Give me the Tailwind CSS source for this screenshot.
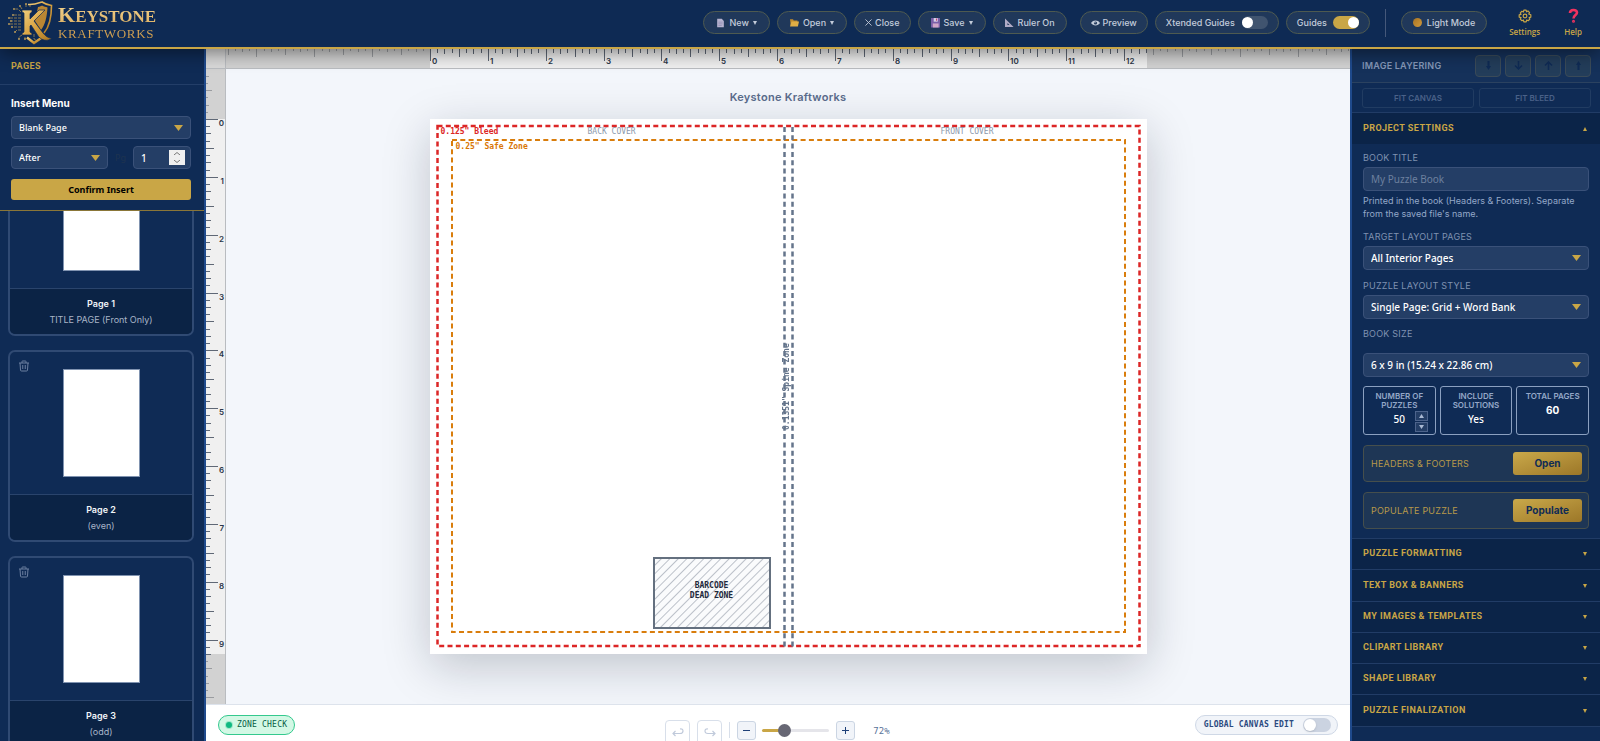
<!DOCTYPE html>
<html lang="en">
<head>
<meta charset="utf-8">
<meta name="viewport" content="width=device-width, initial-scale=1">
<title>Keystone Kraftworks</title>
<script src="https://cdn.jsdelivr.net/npm/@tailwindcss/browser@4"></script>
</head>
<body class="flex h-screen flex-col overflow-hidden bg-[#0f2b55] font-['Inter',sans-serif] text-[11px] text-slate-200">

<header class="relative z-20 flex h-[49px] shrink-0 items-center border-b-2 border-[#c9a646] bg-[#0e2a54] pr-[18px] pb-[2px] pl-2 shadow-[0_4px_18px_rgba(0,0,0,0.45)]">
  <a href="#" aria-label="Keystone Kraftworks" class="flex items-center gap-1">
    <svg class="h-11 w-[46px]" viewBox="0 0 46 44" fill="none">
      <defs><linearGradient id="gold" x1="0" y1="0" x2="1" y2="1"><stop offset="0" stop-color="#f0cd7c"/><stop offset=".5" stop-color="#d9a443"/><stop offset="1" stop-color="#a8741f"/></linearGradient></defs>
      <path d="M20 3.500C26 4 31 2 34 1c3 2 6 3 9.500 3.500C43.500 16 42 25 36 32" stroke="url(#gold)" stroke-width="1.600"/>
      <path d="M30 6c2-.5 3-1 4-1.500 2 1 4 1.500 5.500 2C39 16 37 24 33 29l-6-9z" fill="#b98633"/>
      <path d="M19 36.500l7 5.500 8-5.500" stroke="url(#gold)" stroke-width="2.400"/>
      <path d="M14 9h10v2l-2 1.500V18L31 9h6L26 20l9 12c2.500 3 5 5 9 5.500-5 3-10 2-13.500-2L23 24l-1 1v6l2 1.500V34H14v-1.500l2-1.500V12l-2-1z" fill="url(#gold)" stroke="#0e2a54" stroke-width=".7"/>
      <path d="M13 14H6M13 17H1M13 20H4M13 23H1M13 26H5M13 29H9l-2 2M14 34l-3 2v2M17 36v2M26 33v5l2 1M13 11l-3-3H7M14 8l-2-3M18 6V3M22 6V4" stroke="#a58a50" stroke-width=".8" stroke-dasharray="3 1"/>
      <g fill="#b4975a"><circle cx="5" cy="14" r="1"/><circle cx="1" cy="17" r="1"/><circle cx="3" cy="20" r="1"/><circle cx="1" cy="23" r="1"/><circle cx="4" cy="26" r="1"/><circle cx="7" cy="31" r="1"/><circle cx="11" cy="38" r="1"/><circle cx="17" cy="38" r="1"/><circle cx="6" cy="8" r="1"/><circle cx="12" cy="5" r="1"/><circle cx="18" cy="3" r="1"/></g>
    </svg>
    <span class="flex flex-col bg-linear-to-b from-[#f3d48e] to-[#cc9540] bg-clip-text pt-[2px] font-['Liberation_Serif',serif] text-transparent">
      <span class="text-[17px] leading-[18px] font-bold"><span class="text-[22px]">K</span>EYSTONE</span>
      <span class="text-[13px] leading-4 tracking-wider">KRAFTWORKS</span>
    </span>
  </a>

  <nav class="ml-auto flex items-center gap-[7px] text-[9px] font-medium text-[#c3ccda]">
    <button class="flex h-[23px] items-center gap-1 rounded-full border border-[#4e5a50] bg-[#20385a] px-3">
      <svg class="h-[10px] w-[9px]" viewBox="1 0 10 12"><path d="M2 1h5.500l2.500 2.500V11H2z" fill="#b6b3d0"/><path d="M3.500 5h5M3.500 7h5M3.500 9h4" stroke="#8681ab" stroke-width=".7"/></svg>New<svg class="h-1 w-1" viewBox="0 0 4 4" fill="#c3ccda"><path d="M0 0h4L2 4z"/></svg></button>
    <button class="flex h-[23px] items-center gap-1 rounded-full border border-[#4e5a50] bg-[#20385a] px-3">
      <svg class="h-[10px] w-[9px]" viewBox="0 1 12 11"><path d="M0 1.500h4l1 1.500h5V5H3l-2 5z" fill="#c08b2c"/><path d="M2 4.500h10L10.500 11H0z" fill="#e0ae45"/></svg>Open<svg class="h-1 w-1" viewBox="0 0 4 4" fill="#c3ccda"><path d="M0 0h4L2 4z"/></svg></button>
    <button class="flex h-[23px] items-center gap-[3px] rounded-full border border-[#4e5a50] bg-[#20385a] px-[10px]">
      <svg class="h-[7px] w-[7px]" viewBox="0 0 8 8" stroke="#c3ccda"><path d="M.5.5l7 7M7.500.5l-7 7"/></svg>Close</button>
    <button class="flex h-[23px] items-center gap-1 rounded-full border border-[#4e5a50] bg-[#20385a] px-3">
      <svg class="h-[10px] w-[9px]" viewBox="1 1 10 11"><path d="M1 1h10v10.500H1z" fill="#7b5fa8"/><path d="M4 1h4.500v4H4z" fill="#d8d3ea"/><path d="M6.500 1.500h1.200v2.500H6.500z" fill="#c2456f"/><path d="M3 7h6.500v4.500H3z" fill="#d0a6c8"/></svg>Save<svg class="h-1 w-1" viewBox="0 0 4 4" fill="#c3ccda"><path d="M0 0h4L2 4z"/></svg></button>
    <button class="flex h-[23px] items-center gap-1 rounded-full border border-[#4e5a50] bg-[#20385a] px-[11px]">
      <svg class="h-[10px] w-[9px]" viewBox="1 1 11 11"><path d="M1 1v10.500h10.500z M4 6.500L6.500 9H4z" fill="#b0abc6" fill-rule="evenodd"/></svg>Ruler On</button>
    <button class="ml-[6px] flex h-[23px] items-center gap-[3px] rounded-full border border-[#4e5a50] bg-[#20385a] px-[10px]">
      <svg class="h-2 w-[9px]" viewBox="0 0 9 8"><path d="M0 4c2-3.300 7-3.300 9 0-2 3.300-7 3.300-9 0z" fill="#c3ccda"/><circle cx="4.500" cy="4" r="1.600" fill="#20385a"/><circle cx="4" cy="3.600" r=".6" fill="#c3ccda"/></svg>Preview</button>
    <label class="flex h-[23px] items-center gap-[7px] rounded-full border border-[#4e5a50] bg-[#20385a] px-[10px]">Xtended Guides
      <span class="relative flex h-[13px] w-[26px]"><input type="checkbox" class="h-full w-full appearance-none rounded-full bg-[#40546f]"><span class="absolute top-px left-0 h-[11px] w-[11px] rounded-full bg-white"></span></span></label>
    <label class="flex h-[23px] items-center gap-[6px] rounded-full border border-[#4e5a50] bg-[#20385a] px-[10px]">Guides
      <span class="relative flex h-[13px] w-[26px]"><input type="checkbox" checked class="h-full w-full appearance-none rounded-full bg-[#c9a646]"><span class="absolute top-px right-0 h-[11px] w-[11px] rounded-full bg-white"></span></span></label>
    <span class="mx-2 h-7 w-px bg-[#45587a]"></span>
    <button class="flex h-[23px] items-center gap-[5px] rounded-full border border-[#4e5a50] bg-[#20385a] px-[11px]"><span class="h-[9px] w-[9px] rounded-full bg-linear-to-br from-[#a87424] to-[#d09a3c]"></span>Light Mode</button>
    <button class="ml-[15px] flex flex-col items-center gap-1 font-['Open_Sans',sans-serif] text-[8px] leading-[10px] font-semibold text-[#c9a646]">
      <svg class="h-[14px] w-[14px]" viewBox="0 0 24 24" fill="none" stroke="#c9a646" stroke-width="2" stroke-linejoin="round"><circle cx="12" cy="12" r="3.200"/><path d="M10 2h4l.7 2.800 2.400-1.500 2.800 2.800-1.500 2.400L22 10v4l-2.900.8 1.200 2.500-2.800 2.800-2.500-1.300L14 22h-4l-.8-3.200-2.500 1.300-2.800-2.800 1.300-2.500L2 14v-4l3.200-.8-1.300-2.500 2.800-2.800 2.500 1.300z"/></svg>Settings</button>
    <button class="ml-[17px] flex flex-col items-center gap-1 font-['Open_Sans',sans-serif] text-[8px] leading-[10px] font-semibold text-[#c9a646]">
      <svg class="h-[15px] w-[11px]" viewBox="0 0 11 15" fill="none" stroke="#f0325f" stroke-width="2.600"><path d="M2 5C2 1 9 1 9 4.500 9 7 5.500 7 5.500 10.500"/><circle cx="5.500" cy="13.300" r=".6" stroke-width="1.800"/></svg>Help</button>
  </nav>
</header>

<div class="flex min-h-0 flex-1">

<aside class="flex w-[206px] shrink-0 flex-col border-r-2 border-[#1f4a8c] bg-[#0f2b55]">
  <h2 class="flex h-9 shrink-0 items-center border-b border-[#233e68] px-[11px] font-['Roboto',sans-serif] text-[9px] font-bold tracking-wider text-[#c9a646]">PAGES</h2>
  <form class="flex shrink-0 flex-col border-b border-[#8a7638] pt-[11px] pr-[13px] pb-[10px] pl-[11px] font-['Noto_Sans',sans-serif]">
    <label for="kind" class="mb-[5px] font-['Inter',sans-serif] text-[10px] leading-[15px] font-bold text-white">Insert Menu</label>
    <div class="relative flex"><select id="kind" class="h-[23px] w-full appearance-none rounded-[4px] border border-[#3a5179] bg-[#243e66] px-[7px] text-[9px] font-medium text-white"><option>Blank Page</option></select>
      <svg class="pointer-events-none absolute top-[9px] right-2 h-[6px] w-[9px]" viewBox="0 0 9 6"><path d="M0 0h9L4.500 6z" fill="#c9a646"/></svg></div>
    <div class="mt-[7px] flex items-center">
      <div class="relative flex"><select aria-label="Position" class="h-[23px] w-[97px] appearance-none rounded-[4px] border border-[#3a5179] bg-[#243e66] px-[7px] text-[9px] font-medium text-white"><option>After</option></select>
        <svg class="pointer-events-none absolute top-[9px] right-2 h-[6px] w-[9px]" viewBox="0 0 9 6"><path d="M0 0h9L4.500 6z" fill="#c9a646"/></svg></div>
      <label for="pg" class="ml-auto text-[9px] text-[#1e3350]">Pg</label>
      <div class="relative ml-[7px] flex"><input id="pg" type="number" value="1" class="h-[23px] w-[58px] appearance-none rounded-[4px] border border-[#3a5179] bg-[#243e66] px-[7px] text-[10px] font-medium text-white [appearance:textfield] [&::-webkit-inner-spin-button]:appearance-none">
        <span class="absolute top-1 right-[6px] flex h-[15px] w-4 flex-col bg-[#efefef]">
          <button type="button" aria-label="Increase" class="flex flex-1 items-center justify-center"><svg class="h-[3px] w-[6px]" viewBox="0 0 6 3" fill="none" stroke="#777"><path d="M0 3l3-2.500L6 3"/></svg></button>
          <button type="button" aria-label="Decrease" class="flex flex-1 items-center justify-center"><svg class="h-[3px] w-[6px]" viewBox="0 0 6 3" fill="none" stroke="#777"><path d="M0 0l3 2.500L6 0"/></svg></button>
        </span></div>
    </div>
    <button type="button" class="mt-[10px] h-[21px] rounded-[3px] bg-[#c9a646] text-[9px] font-bold text-black">Confirm Insert</button>
  </form>
  <div class="min-h-0 flex-1 overflow-hidden pr-[10px] pl-2">
    <ul class="-mt-[67px] flex flex-col gap-[14px]">
      <li class="overflow-hidden rounded-[7px] border-2 border-[#304a73]">
        <div class="flex h-[142px] justify-center pt-[17px]"><div class="h-[108px] w-[77px] border border-[#8093b0] bg-white"></div></div>
        <div class="flex h-[46px] flex-col items-center border-t border-[#2a446c] bg-[#0b2345] pt-[7px] text-[9px] leading-4"><b class="font-semibold text-slate-100">Page 1</b><span class="text-[#a9b5c8]">TITLE PAGE (Front Only)</span></div>
      </li>
      <li class="relative overflow-hidden rounded-[7px] border-2 border-[#304a73]">
        <button aria-label="Delete page 2" class="absolute top-2 left-2"><svg class="h-3 w-3" viewBox="0 0 24 24" fill="none" stroke="#6d80a1" stroke-width="2"><path d="M2 6h20M8 6V3q0-1 1-1h6q1 0 1 1v3M4 6l1 14q0 2 2 2h10q2 0 2-2l1-14M9.500 10v8M14.500 10v8"/></svg></button>
        <div class="flex h-[142px] justify-center pt-[17px]"><div class="h-[108px] w-[77px] border border-[#8093b0] bg-white"></div></div>
        <div class="flex h-[46px] flex-col items-center border-t border-[#2a446c] bg-[#0b2345] pt-[7px] text-[9px] leading-4"><b class="font-semibold text-slate-100">Page 2</b><span class="text-[#a9b5c8]">(even)</span></div>
      </li>
      <li class="relative overflow-hidden rounded-[7px] border-2 border-[#304a73]">
        <button aria-label="Delete page 3" class="absolute top-2 left-2"><svg class="h-3 w-3" viewBox="0 0 24 24" fill="none" stroke="#6d80a1" stroke-width="2"><path d="M2 6h20M8 6V3q0-1 1-1h6q1 0 1 1v3M4 6l1 14q0 2 2 2h10q2 0 2-2l1-14M9.500 10v8M14.500 10v8"/></svg></button>
        <div class="flex h-[142px] justify-center pt-[17px]"><div class="h-[108px] w-[77px] border border-[#8093b0] bg-white"></div></div>
        <div class="flex h-[46px] flex-col items-center border-t border-[#2a446c] bg-[#0b2345] pt-[7px] text-[9px] leading-4"><b class="font-semibold text-slate-100">Page 3</b><span class="text-[#a9b5c8]">(odd)</span></div>
      </li>
    </ul>
  </div>
</aside>

<main class="flex min-w-0 flex-1 flex-col bg-[#f3f6fb]">
  <div class="flex h-5 shrink-0 border-b border-[#b9bcc0] bg-[#d2d2d2]">
    <div class="w-5 shrink-0 border-r border-[#b9bcc0] bg-[#d9d9d9]"></div>
    <svg id="rulerX" class="h-full min-w-0 flex-1 font-['Inter',sans-serif] text-[8px] font-semibold"></svg>
  </div>
  <div class="flex min-h-0 flex-1">
    <svg id="rulerY" class="h-full w-5 shrink-0 border-r border-[#b9bcc0] bg-[#d2d2d2] font-['Inter',sans-serif] text-[8px] font-semibold"></svg>
    <div class="flex min-w-0 flex-1 flex-col items-center overflow-hidden">
      <h1 class="mt-5 mb-[14px] text-[11px] leading-4 font-semibold tracking-wide text-[#5a6c8c]">Keystone Kraftworks</h1>
      <div class="relative h-[535px] w-[717px] shrink-0 bg-white font-['DejaVu_Sans_Mono',monospace] text-[8px] leading-[10px] shadow-[0_12px_44px_rgba(15,23,42,0.22)]">
        <svg class="absolute inset-0 h-full w-full" viewBox="0 0 717 535" fill="none">
          <defs><pattern id="hatch" width="6" height="6" patternUnits="userSpaceOnUse" patternTransform="rotate(45)"><path d="M.5 0v6" stroke="#bcc1c9"/></pattern></defs>
          <rect x="7.500" y="7" width="702" height="520" stroke="#dc2626" stroke-width="2.500" stroke-dasharray="5 3.300"/>
          <rect x="22" y="21" width="673" height="492" stroke="#d97d0c" stroke-width="2" stroke-dasharray="5 3.300"/>
          <path d="M354.500 8v520M362.500 8v520" stroke="#64748b" stroke-width="2.500" stroke-dasharray="5 3.300"/>
          <rect x="224" y="439" width="116" height="70" fill="#fafbfc"/>
          <rect x="224" y="439" width="116" height="70" fill="url(#hatch)" stroke="#64707f" stroke-width="2"/>
        </svg>
        <span class="absolute top-[8px] left-[11px] font-bold text-[#dc2626]">0.125" Bleed</span>
        <span class="absolute top-[23px] left-[26px] font-bold text-[#d97706]">0.25" Safe Zone</span>
        <span class="absolute top-[8px] left-[158px] text-[#8d99ab]">BACK COVER</span>
        <span class="absolute top-[8px] left-[511px] text-[#8d99ab]">FRONT COVER</span>
        <span class="absolute top-[218px] left-[352px] h-[100px] rotate-180 text-center font-bold text-[#64748b] [writing-mode:vertical-rl]">0.1351" Spine Zone</span>
        <span class="absolute top-[462px] left-[224px] w-[116px] text-center font-bold whitespace-pre-line text-[#1e293b]">BARCODE
DEAD ZONE</span>
      </div>
    </div>
  </div>
  <footer class="grid h-[37px] shrink-0 grid-cols-[1fr_auto_1fr] items-start border-t border-[#dde3ec] bg-white px-3 pt-[10px] font-['DejaVu_Sans_Mono',monospace] text-[8px]">
    <button class="flex h-5 items-center gap-[5px] justify-self-start rounded-full border border-[#34c98e] bg-[#d3f8e5] px-[7px] tracking-wide text-[#065f46]"><span class="h-[6px] w-[6px] rounded-full bg-[#10b981] shadow-[0_0_0_1px_#9ee8c9]"></span>ZONE CHECK</button>
    <div class="flex h-8 items-start pt-[5px] pl-1">
      <button aria-label="Undo" class="flex h-[25px] w-[25px] items-center justify-center rounded-[4px] border border-[#d8dfea]"><svg class="h-[10px] w-3" viewBox="0 0 12 10" fill="none" stroke="#c0cadb" stroke-width="1.200"><path d="M3.500 3L1 5.500 3.500 8M1 5.500h7q3 0 3-2.500T8 1"/></svg></button>
      <button aria-label="Redo" class="ml-[7px] flex h-[25px] w-[25px] items-center justify-center rounded-[4px] border border-[#d8dfea]"><svg class="h-[10px] w-3" viewBox="0 0 12 10" fill="none" stroke="#c0cadb" stroke-width="1.200"><path d="M8.500 3L11 5.500 8.500 8M11 5.500H4Q1 5.500 1 3t3-2"/></svg></button>
      <span class="mx-[7px] mt-[2px] h-4 w-px bg-[#d8dfea]"></span>
      <button aria-label="Zoom out" class="mt-px flex h-[19px] w-[19px] items-center justify-center rounded-[3px] border border-[#cbd5e3] bg-[#f1f4f9]"><svg class="h-[7px] w-[7px]" viewBox="0 0 7 7" stroke="#1e4078"><path d="M0 3.500h7"/></svg></button>
      <div class="ml-[6px] flex h-[21px] w-[67px] items-center"><input type="range" aria-label="Zoom" min="0" max="300" value="88" class="h-[3px] w-full appearance-none rounded-full bg-linear-to-r from-[#c9a646] from-30% to-[#e5e5ea] to-30% [&::-webkit-slider-thumb]:h-[13px] [&::-webkit-slider-thumb]:w-[13px] [&::-webkit-slider-thumb]:appearance-none [&::-webkit-slider-thumb]:rounded-full [&::-webkit-slider-thumb]:bg-[#676774]"></div>
      <button aria-label="Zoom in" class="mt-px ml-[7px] flex h-[19px] w-[19px] items-center justify-center rounded-[3px] border border-[#cbd5e3] bg-[#f1f4f9]"><svg class="h-[7px] w-[7px]" viewBox="0 0 7 7" stroke="#1e4078"><path d="M0 3.500h7M3.500 0v7"/></svg></button>
      <span class="mt-[5px] ml-[13px] w-[27px] text-center text-[9px] leading-3 text-[#5a7399]">72%</span>
    </div>
    <label class="flex h-5 items-center gap-[9px] justify-self-end rounded-full border border-[#cfd8e6] bg-[#f1f4f9] pr-[6px] pl-2 font-bold tracking-wide text-[#2b4a80]">GLOBAL CANVAS EDIT
      <span class="relative flex h-[14px] w-7"><input type="checkbox" class="h-full w-full appearance-none rounded-full bg-[#cbd3e1]"><span class="absolute top-px left-px h-3 w-3 rounded-full bg-white shadow"></span></span></label>
  </footer>
</main>

<aside class="flex w-[250px] shrink-0 flex-col overflow-hidden border-l-2 border-[#1f4a8c] bg-[#0f2b55]">
  <div class="flex h-[34px] shrink-0 items-center gap-1 border-b border-[#2b4260] bg-[#15315a] pr-[9px] pl-[10px]">
    <h2 class="mr-auto text-[9px] font-semibold tracking-wide text-[#8497b7]">IMAGE LAYERING</h2>
    <button aria-label="Send to back" class="flex h-[22px] w-[26px] items-center justify-center rounded-[4px] border border-[#3a4a58] bg-[#233d5a]"><svg class="h-[9px] w-[9px]" viewBox="0 0 9 9" fill="#0f2b55"><path d="M3.500 0h2v5H7L4.500 9 2 5h1.500z"/></svg></button>
    <button aria-label="Send backward" class="flex h-[22px] w-[26px] items-center justify-center rounded-[4px] border border-[#3a4a58] bg-[#233d5a]"><svg class="h-[9px] w-[9px]" viewBox="0 0 9 9" fill="none" stroke="#0f2b55" stroke-width="1.500"><path d="M4.500 0v8M1 4.500L4.500 8 8 4.500"/></svg></button>
    <button aria-label="Bring forward" class="flex h-[22px] w-[26px] items-center justify-center rounded-[4px] border border-[#3a4a58] bg-[#233d5a]"><svg class="h-[9px] w-[9px]" viewBox="0 0 9 9" fill="none" stroke="#0f2b55" stroke-width="1.500"><path d="M4.500 9V1M1 4.500L4.500 1 8 4.500"/></svg></button>
    <button aria-label="Bring to front" class="flex h-[22px] w-[26px] items-center justify-center rounded-[4px] border border-[#3a4a58] bg-[#233d5a]"><svg class="h-[9px] w-[9px]" viewBox="0 0 9 9" fill="#0f2b55"><path d="M3.500 9h2V4H7L4.500 0 2 4h1.500z"/></svg></button>
  </div>
  <div class="flex h-[30px] shrink-0 items-center gap-[5px] border-b border-[#213c66] pr-[9px] pl-[10px] text-[8px] font-semibold text-[#4a6188]">
    <button class="h-5 flex-1 rounded-[3px] border border-[#213c62]">FIT CANVAS</button>
    <button class="h-5 flex-1 rounded-[3px] border border-[#213c62]">FIT BLEED</button>
  </div>
  <button class="flex h-[31px] shrink-0 items-center justify-between bg-[#0b2448] pr-[13px] pl-[11px] font-['Roboto',sans-serif] text-[9px] font-bold tracking-wider text-[#c9a646]">PROJECT SETTINGS<svg class="h-1 w-1" viewBox="0 0 4 4" fill="#c9a646"><path d="M0 4h4L2 0z"/></svg></button>
  <form class="flex shrink-0 flex-col border-b border-[#213c66] px-[11px] pt-[8px] pb-[9px] text-[9px]">
    <label for="title" class="leading-3 tracking-wide text-[#7f92b1]">BOOK TITLE</label>
    <input id="title" placeholder="My Puzzle Book" class="mt-[3px] h-6 rounded-[4px] border border-[#3a5179] bg-[#243e66] px-[7px] font-['Noto_Sans',sans-serif] text-[10px] text-white placeholder:text-[#6d809f]">
    <p class="mt-[3px] text-[9px] leading-[13px] text-[#94a8c8]">Printed in the book (Headers &amp; Footers). Separate from the saved file's name.</p>
    <label for="target" class="mt-[11px] leading-3 tracking-wide text-[#7f92b1]">TARGET LAYOUT PAGES</label>
    <div class="relative mt-[3px] flex"><select id="target" class="h-6 w-full appearance-none rounded-[4px] border border-[#3a5179] bg-[#243e66] px-[7px] font-['Noto_Sans',sans-serif] text-[10px] font-medium text-white"><option>All Interior Pages</option></select>
      <svg class="pointer-events-none absolute top-[9px] right-2 h-[6px] w-[9px]" viewBox="0 0 9 6"><path d="M0 0h9L4.500 6z" fill="#c9a646"/></svg></div>
    <label for="style" class="mt-[10px] leading-3 tracking-wide text-[#7f92b1]">PUZZLE LAYOUT STYLE</label>
    <div class="relative mt-[3px] flex"><select id="style" class="h-6 w-full appearance-none rounded-[4px] border border-[#3a5179] bg-[#243e66] px-[7px] font-['Noto_Sans',sans-serif] text-[10px] font-medium text-white"><option>Single Page: Grid + Word Bank</option></select>
      <svg class="pointer-events-none absolute top-[9px] right-2 h-[6px] w-[9px]" viewBox="0 0 9 6"><path d="M0 0h9L4.500 6z" fill="#c9a646"/></svg></div>
    <label for="size" class="mt-[9px] leading-3 tracking-wide text-[#7f92b1]">BOOK SIZE</label>
    <div class="relative mt-[13px] flex"><select id="size" class="h-6 w-full appearance-none rounded-[4px] border border-[#3a5179] bg-[#243e66] px-[7px] font-['Noto_Sans',sans-serif] text-[10px] font-medium text-white"><option>6 x 9 in (15.24 x 22.86 cm)</option></select>
      <svg class="pointer-events-none absolute top-[9px] right-2 h-[6px] w-[9px]" viewBox="0 0 9 6"><path d="M0 0h9L4.500 6z" fill="#c9a646"/></svg></div>
    <div class="mt-[9px] grid grid-cols-3 gap-1 text-center text-[8px] leading-[9px] font-semibold text-[#94a8c8]">
      <div class="relative h-[49px] rounded-[3px] border border-[#8ba0c0] pt-[5px]"><label for="count">NUMBER OF<br>PUZZLES</label>
        <input id="count" value="50" class="block h-[18px] w-full text-center font-['Noto_Sans',sans-serif] text-[10px] font-medium text-white">
        <span class="absolute right-[7px] bottom-[2px] flex flex-col gap-px"><button type="button" aria-label="More puzzles" class="flex h-[10px] w-[13px] items-center justify-center border border-[#4d648c] bg-[#243e66]"><svg class="h-1 w-[5px]" viewBox="0 0 5 4" fill="#a9b9d3"><path d="M0 4h5L2.500 0z"/></svg></button><button type="button" aria-label="Fewer puzzles" class="flex h-[10px] w-[13px] items-center justify-center border border-[#4d648c] bg-[#243e66]"><svg class="h-1 w-[5px]" viewBox="0 0 5 4" fill="#a9b9d3"><path d="M0 0h5L2.500 4z"/></svg></button></span></div>
      <div class="h-[49px] rounded-[3px] border border-[#8ba0c0] pt-[5px]">INCLUDE<br>SOLUTIONS<div class="mt-[3px] font-['Noto_Sans',sans-serif] text-[10px] leading-3 font-medium text-white">Yes</div></div>
      <div class="h-[49px] rounded-[3px] border border-[#8ba0c0] pt-[5px]">TOTAL PAGES<div class="mt-[3px] text-[10px] leading-3 font-bold text-white">60</div></div>
    </div>
    <div class="mt-[10px] flex h-[37px] items-center justify-between rounded-[4px] border border-[#464f4c] bg-[#1e3655] pr-[6px] pl-[7px] tracking-wide text-[#b8994a]">HEADERS &amp; FOOTERS<button type="button" class="h-[23px] w-[69px] rounded-[3px] bg-linear-to-br from-[#caa94a] to-[#9c7728] text-[10px] font-bold tracking-normal text-[#0f2b55]">Open</button></div>
    <div class="mt-[10px] flex h-[37px] items-center justify-between rounded-[4px] border border-[#464f4c] bg-[#1e3655] pr-[6px] pl-[7px] tracking-wide text-[#b8994a]">POPULATE PUZZLE<button type="button" class="h-[23px] w-[69px] rounded-[3px] bg-linear-to-br from-[#caa94a] to-[#9c7728] text-[10px] font-bold tracking-normal text-[#0f2b55]">Populate</button></div>
  </form>
  <div class="flex shrink-0 flex-col font-['Roboto',sans-serif] text-[9px] font-bold text-[#c9a646]">
    <button class="flex h-[31px] items-center justify-between border-b border-[#213c66] bg-[#0b2448] pr-[13px] pl-[11px] tracking-wider">PUZZLE FORMATTING<svg class="h-1 w-1" viewBox="0 0 4 4" fill="#c9a646"><path d="M0 0h4L2 4z"/></svg></button>
    <button class="flex h-8 items-center justify-between border-b border-[#213c66] bg-[#0b2448] pr-[13px] pl-[11px] tracking-wider">TEXT BOX &amp; BANNERS<svg class="h-1 w-1" viewBox="0 0 4 4" fill="#c9a646"><path d="M0 0h4L2 4z"/></svg></button>
    <button class="flex h-[31px] items-center justify-between border-b border-[#213c66] bg-[#0b2448] pr-[13px] pl-[11px] tracking-wider">MY IMAGES &amp; TEMPLATES<svg class="h-1 w-1" viewBox="0 0 4 4" fill="#c9a646"><path d="M0 0h4L2 4z"/></svg></button>
    <button class="flex h-[31px] items-center justify-between border-b border-[#213c66] bg-[#0b2448] pr-[13px] pl-[11px] tracking-wider">CLIPART LIBRARY<svg class="h-1 w-1" viewBox="0 0 4 4" fill="#c9a646"><path d="M0 0h4L2 4z"/></svg></button>
    <button class="flex h-[31px] items-center justify-between border-b border-[#213c66] bg-[#0b2448] pr-[13px] pl-[11px] tracking-wider">SHAPE LIBRARY<svg class="h-1 w-1" viewBox="0 0 4 4" fill="#c9a646"><path d="M0 0h4L2 4z"/></svg></button>
    <button class="flex h-8 items-center justify-between border-b border-[#213c66] bg-[#0b2448] pr-[13px] pl-[11px] tracking-wider">PUZZLE FINALIZATION<svg class="h-1 w-1" viewBox="0 0 4 4" fill="#c9a646"><path d="M0 0h4L2 4z"/></svg></button>
  </div>
</aside>
</div>

<script>
// Rulers: ticks every eighth of an inch. The horizontal one is anchored to the
// middle of the canvas, where the sheet is centred; the vertical one to its top.
const INCH = 535 / 9.25;
function ruler(id, horizontal, anchor, origin, span, from, to) {
  let out = horizontal
    ? `<rect x="${origin}" y="0" width="${span}" height="20" fill="#f0f0f0"/>`
    : `<rect x="0" y="${origin}" width="20" height="${span}" fill="#f0f0f0"/>`;
  for (let i = from * 8; i <= to * 8; i++) {
    const p = Math.round(origin + i * INCH / 8);
    const inside = i >= 0 && i * INCH / 8 <= span;
    const len = i % 8 === 0 ? (inside ? 12 : 8) : i % 4 === 0 ? (inside ? 8 : 6) : i % 2 === 0 ? (inside ? 5 : 3) : (inside ? 4 : 2);
    const color = inside ? '#5f6876' : '#9a9ca0';
    out += horizontal
      ? `<rect x="${p}" width="1" height="${len}" fill="${color}"/>`
      : `<rect y="${p}" width="${len}" height="1" fill="${color}"/>`;
    if (inside && i % 8 === 0) out += horizontal
      ? `<text x="${p + 2}" y="15" fill="#2b3648">${i / 8}</text>`
      : `<text x="18" y="${p + 7}" text-anchor="end" fill="#2b3648">${i / 8}</text>`;
  }
  document.getElementById(id).innerHTML = `<svg x="${anchor}" overflow="visible">${out}</svg>`;
}
ruler('rulerX', true, '50%', -358, 717, -20, 32);
ruler('rulerY', false, '0', 50, 535, -1, 20);
</script>
</body>
</html>
